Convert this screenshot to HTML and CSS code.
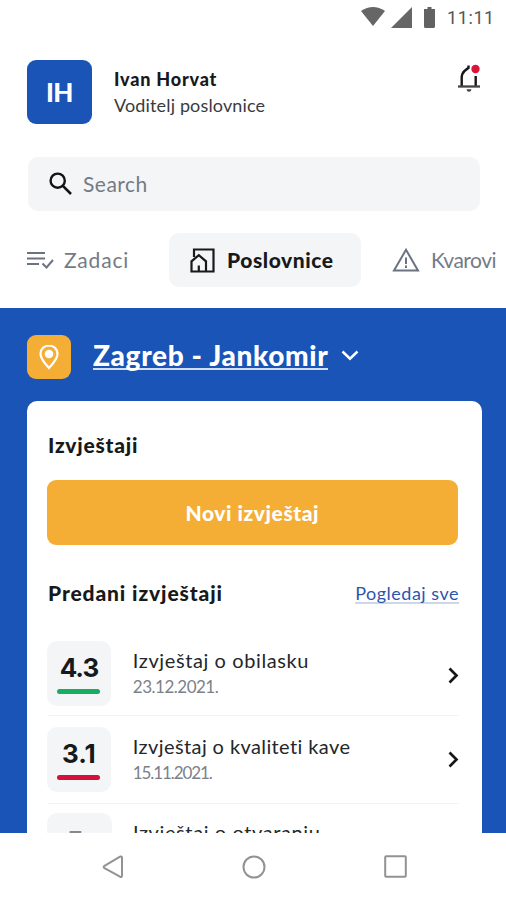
FILE: index.html
```html
<!DOCTYPE html>
<html lang="hr">
<head>
<meta charset="utf-8">
<title>Poslovnice</title>
<link rel="stylesheet" href="styles.css">
</head>
<body>
<div class="screen">
  <div class="status">
    <svg width="26" height="20" viewBox="0 0 26 20"><path d="M1 4Q13-4 25 4L13 19Z" fill="#666"/></svg>
    <svg width="21" height="21" viewBox="0 0 21 21"><path d="M0 21H21V0Z" fill="#666"/></svg>
    <svg width="11" height="21" viewBox="0 0 11 21"><path d="M3.500 0h4v2H11v17.500q0 1.500-1.500 1.500h-8Q0 21 0 19.500V2h3.500z" fill="#626262"/></svg>
    <span class="clock">11:11</span>
  </div>

  <header class="profile">
    <div class="avatar">IH</div>
    <div class="who">
      <div class="name">Ivan Horvat</div>
      <div class="role">Voditelj poslovnice</div>
    </div>
    <svg class="bell" width="24" height="30" viewBox="0 0 24 30" fill="none">
      <path d="M11.500 1.500v2.300L7.500 7Q4.700 9.500 4.700 14v8.500M18.700 12v10.500" stroke="#161819" stroke-width="2.400"/>
      <path d="M1 22.500h22" stroke="#444" stroke-width="2.300"/>
      <path d="M9.500 25.200h5q-.4 2.500-2.500 2.500t-2.500-2.500z" fill="#444"/>
      <circle cx="18.500" cy="5" r="4.200" fill="#dc143c"/>
    </svg>
  </header>

  <div class="search">
    <svg width="24" height="24" viewBox="0 0 24 24" fill="none" stroke="#121415"><circle cx="8.700" cy="8.700" r="7.100" stroke-width="2.400"/><path d="M13.600 13.600l8.400 8.400" stroke-width="2.600"/></svg>
    <span>Search</span>
  </div>

  <nav class="tabs">
    <div class="tab tasks">
      <svg width="27" height="18" viewBox="0 0 27 18" fill="none" stroke="#6b7280" stroke-width="2"><path d="M0 2h18M0 7.500h18M0 13h12M15.500 12.500l4 4L26 9"/></svg>
      <span>Zadaci</span>
    </div>
    <div class="tab active">
      <svg width="25" height="25" viewBox="0 0 25 25" fill="none" stroke="#17191b" stroke-width="2.200"><path d="M4 9V1.500h19.500v22H1.500V13.300L8.800 7.200l7.200 6.100v10.200M8.800 23v-5.500"/></svg>
      <span>Poslovnice</span>
    </div>
    <div class="tab faults">
      <svg width="28" height="25" viewBox="0 0 28 25" fill="none" stroke="#6b7280" stroke-width="2"><path d="M14 1.800L26 22.500H2zM14 9.500v6.500M14 17.500v2.500"/></svg>
      <span>Kvarovi</span>
    </div>
  </nav>

  <main class="branch">
    <div class="location">
      <div class="pin">
        <svg width="20" height="26" viewBox="0 0 20 26"><path d="M10 1.500c-4.800 0-8.500 3.600-8.500 8.200C1.500 15 6 19.500 10 24c4-4.500 8.500-9 8.500-14.300 0-4.600-3.700-8.200-8.500-8.200z" fill="none" stroke="#fff" stroke-width="2.200"/><circle cx="10" cy="10" r="4.300" fill="#fff"/></svg>
      </div>
      <span class="place">Zagreb - Jankomir</span>
      <svg class="down" width="18" height="11" viewBox="0 0 18 11" fill="none"><path d="M1.500 1.500L9 8.700l7.500-7.200" stroke="#fff" stroke-width="2.500"/></svg>
    </div>
    <section class="card">
      <h2 class="heading">Izvještaji</h2>
      <div class="button"><span>Novi izvještaj</span></div>
      <div class="subhead">
        <h2 class="submitted">Predani izvještaji</h2>
        <a class="all">Pogledaj sve</a>
      </div>
      <div class="row">
        <div class="score"><b class="tight">4.3</b><i class="good"></i></div>
        <div class="info"><div class="title t1">Izvještaj o obilasku</div><div class="date d1">23.12.2021.</div></div>
        <svg class="next" width="11" height="17" viewBox="0 0 11 17" fill="none"><path d="M1.500 1.500l7 7-7 7" stroke="#151719" stroke-width="2.700"/></svg>
      </div>
      <div class="row">
        <div class="score"><b>3.1</b><i class="bad"></i></div>
        <div class="info"><div class="title t2">Izvještaj o kvaliteti kave</div><div class="date d2">15.11.2021.</div></div>
        <svg class="next up" width="11" height="17" viewBox="0 0 11 17" fill="none"><path d="M1.500 1.500l7 7-7 7" stroke="#151719" stroke-width="2.700"/></svg>
      </div>
      <div class="row">
        <div class="score partial"><b>5</b></div>
        <div class="info"><div class="title t3">Izvještaj o otvaranju</div></div>
      </div>
    </section>
  </main>

  <footer class="system">
    <svg width="22" height="24" viewBox="0 0 22 24" fill="none" stroke="#929292" stroke-width="2"><path d="M18 1.700Q20 1 20 3v17.500q0 2-2 1.200L2.500 13.200q-1.700-1.200 0-2.400z"/></svg>
    <svg width="24" height="24" viewBox="0 0 24 24" fill="none" stroke="#929292" stroke-width="2"><circle cx="12" cy="12" r="10.500"/></svg>
    <svg width="23" height="23" viewBox="0 0 23 23" fill="none" stroke="#929292" stroke-width="2"><rect x="1.200" y="1.200" width="20.600" height="20.600" rx="1"/></svg>
  </footer>
</div>
</body>
</html>
```
FILE: styles.css
```css
* { box-sizing: border-box; }
body { margin: 0; background: #fff; font-family: Lato, "Noto Sans", sans-serif; font-variant-ligatures: none; color: #17191b; }
svg { display: block; flex: none; }
h2 { margin: 0; }
span, .name, .role, .title, .date, .submitted, .all { white-space: nowrap; }
.screen { width: 506px; height: 900px; overflow: hidden; display: flex; flex-direction: column; }

.status { height: 60px; flex: none; display: flex; align-items: flex-start; padding: 7px 0 0 360px; }
.status svg:nth-child(2) { margin-left: 5px; }
.status svg:nth-child(3) { margin-left: 12px; }
.clock { margin-left: 12px; font: 400 18px/22px Roboto, sans-serif; letter-spacing: .6px; color: #555; }

.profile { height: 97px; flex: none; display: flex; align-items: flex-start; padding-left: 27px; }
.avatar { width: 65px; height: 64px; border-radius: 9px; background: #1b54b7; color: #fff; font-weight: 900; font-size: 26px; line-height: 64px; letter-spacing: -.6px; text-align: center; }
.who { margin-left: 22px; width: 343px; padding-top: 6px; }
.name { font-size: 18px; font-weight: 900; line-height: 26px; letter-spacing: .8px; }
.role { font-size: 18px; line-height: 26px; color: #383b40; letter-spacing: .15px; }
.bell { margin-top: 4px; }

.search { height: 54px; flex: none; margin: 0 26px 0 28px; border-radius: 10px; background: #f3f5f7; display: flex; align-items: center; padding-left: 21px; color: #747b86; font-size: 21px; }
.search span { margin-left: 10px; line-height: 26px; letter-spacing: .5px; }

.tabs { height: 97px; flex: none; padding: 22px 0 0 27px; display: flex; align-items: flex-start; }
.tab { height: 54px; display: flex; align-items: center; flex: none; font-size: 21px; color: #747b86; }
.tab span { line-height: 26px; }
.tasks { width: 142px; }
.tasks span { margin-left: 10px; letter-spacing: .8px; }
.active { width: 192px; border-radius: 10px; background: #f3f5f7; color: #17191b; font-weight: 900; padding-left: 21px; }
.active span { margin-left: 12px; letter-spacing: .55px; }
.faults { margin-left: 31px; }
.faults span { margin-left: 11px; letter-spacing: -.5px; }

.branch { height: 525px; flex: none; background: #1b54b7; padding: 27px 24px 0 27px; overflow: hidden; }
.location { height: 66px; display: flex; align-items: flex-start; }
.pin { width: 44px; height: 44px; border-radius: 9px; background: #f5ae35; display: flex; align-items: center; justify-content: center; }
.place { margin-left: 22px; width: 235px; color: #fff; font-size: 28px; font-weight: 900; line-height: 41px; height: 35px; letter-spacing: .65px; border-bottom: 2px solid #d5dff2; }
.down { margin: 15px 0 0 13px; }

.card { height: 480px; border-radius: 10px; background: #fff; padding: 31px 23px 0 20px; }
.heading { font-size: 21px; line-height: 26px; font-weight: 900; padding-left: 1px; letter-spacing: .75px; }
.button { height: 65px; margin: 22px 1px 0 -.5px; border-radius: 9px; background: #f5ae35; color: #fff; font-size: 21px; font-weight: 900; line-height: 66px; letter-spacing: .55px; text-align: center; }
.subhead { height: 96px; display: flex; align-items: flex-start; justify-content: space-between; padding: 35px 0 0 1px; }
.submitted { font-size: 21px; line-height: 26px; font-weight: 900; letter-spacing: .88px; }
.all { font-size: 18px; line-height: 26px; height: 24px; letter-spacing: .5px; color: #2f55ac; border-bottom: 2px solid #cdd7ea; }

.row { height: 86px; display: flex; align-items: flex-start; position: relative; }
.row:not(:last-child)::after { content: ""; position: absolute; left: 1px; right: 0; bottom: 11px; height: 1px; background: #f2f3f4; }
.row:nth-last-child(2)::after { bottom: 9px; }
.score { width: 65px; height: 65px; margin-left: -.5px; border-radius: 10px; background: #f3f5f7; padding-top: 11px; display: flex; flex-direction: column; align-items: center; }
.score b { font: 700 26px/31px Inter, sans-serif; }
.score .tight { letter-spacing: -1px; }
.score i { width: 43px; height: 5px; border-radius: 3px; margin-top: 6px; }
.good { background: #18ae61; }
.bad { background: #d4103c; }
.partial b { color: #888; padding-right: 8px; line-height: 34px; }
.info { margin-left: 21.5px; width: 316px; padding-top: 6px; }
.title { font-size: 20px; line-height: 26px; color: #24272a; }
.t1 { letter-spacing: .6px; }
.t2 { letter-spacing: .4px; }
.t3 { letter-spacing: .6px; }
.date { font-size: 17px; line-height: 27px; color: #7b818a; }
.d1 { letter-spacing: -.5px; }
.d2 { letter-spacing: -1.1px; }
.next { margin-top: 26px; }
.up { margin-top: 24px; }

.system { height: 67px; flex: none; display: flex; justify-content: space-between; align-items: center; padding: 0 99px 0 102px; }
```
